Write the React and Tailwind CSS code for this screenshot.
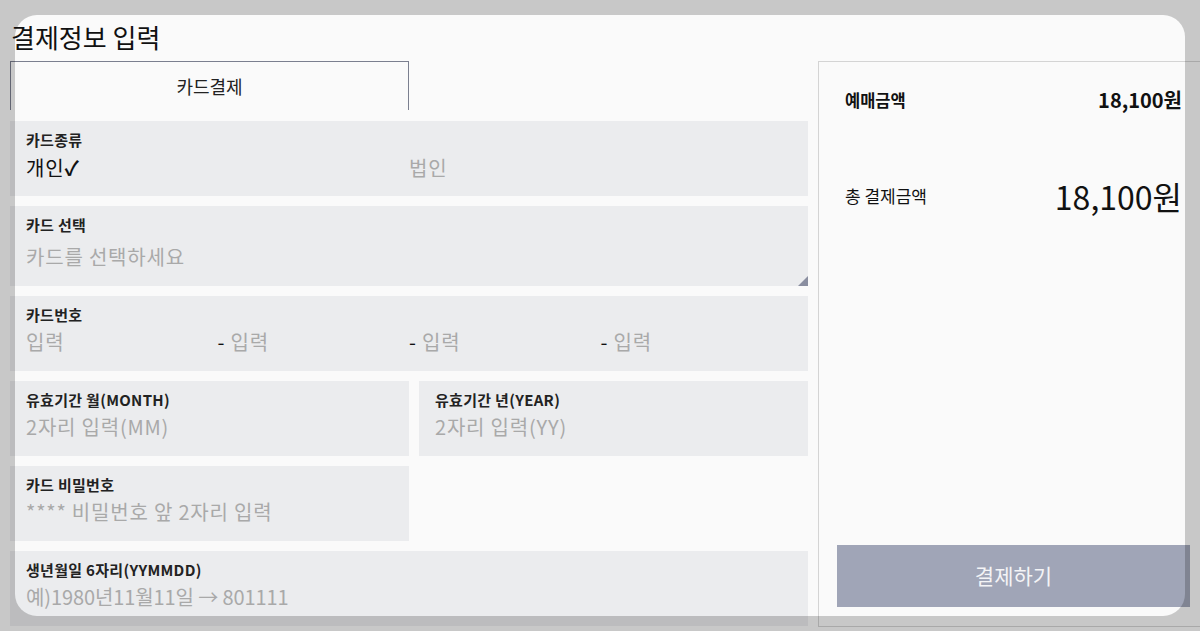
import React from "react";

function Field({ label, className = "", h = "h-[75px]", gap = "mt-[5px]", children }) {
  return (
    <div className={`relative bg-[#ebecee] px-4 pt-[10px] ${h} ${className}`}>
      <div className="text-[15px] font-bold leading-[18px] tracking-[0.3px] text-[#222]">{label}</div>
      <div className={`${gap} flex text-[20px] leading-[26px] tracking-[0.8px] text-[#a9a9a9]`}>{children}</div>
    </div>
  );
}

export default function App() {
  return (
    <div className="relative h-[631px] w-[1200px] overflow-hidden bg-[#fafafa] font-['Noto_Sans_CJK_KR',sans-serif] text-[#111]">
      <div className="pt-[21px]">
        <h1 className="ml-[11px] text-[26px] leading-[32px] font-normal text-[#111]">결제정보 입력</h1>
        <div className="mt-[8px] flex">
          {/* Left column */}
          <div className="ml-[10px] flex w-[798px] flex-col">
            <div className="flex h-[49px] w-[399px] items-center justify-center border-x border-t border-[#7b7f8f] text-[18px] leading-[22px] text-[#222]">
              카드결제
            </div>
            <div className="mt-[11px] flex flex-col gap-[10px]">
              <Field label="카드종류" gap="mt-[6px]">
                <span className="w-[384px] text-[#111]">개인<span className="font-bold">✓</span></span>
                <span className="w-[384px]">법인</span>
              </Field>
              <Field label="카드 선택" h="h-[80px]" gap="mt-[10px]">
                <span>카드를 선택하세요</span>
                <svg className="absolute right-0 bottom-0" width="10" height="10" viewBox="0 0 10 10">
                  <polygon points="10,0 10,10 0,10" fill="#8a8ea0" />
                </svg>
              </Field>
              <Field label="카드번호">
                <span className="w-[192px]">입력</span>
                <span className="w-[192px]"><span className="text-[#111]">- </span>입력</span>
                <span className="w-[192px]"><span className="text-[#111]">- </span>입력</span>
                <span className="w-[192px]"><span className="text-[#111]">- </span>입력</span>
              </Field>
              <div className="flex gap-[10px]">
                <Field label="유효기간 월(MONTH)" className="w-[399px]">
                  <span>2자리 입력(MM)</span>
                </Field>
                <Field label="유효기간 년(YEAR)" className="flex-1">
                  <span>2자리 입력(YY)</span>
                </Field>
              </div>
              <Field label="카드 비밀번호" className="w-[399px]">
                <span>**** 비밀번호 앞 2자리 입력</span>
              </Field>
              <Field label="생년월일 6자리(YYMMDD)">
                <span className="tracking-[-0.1px]">예)1980년11월11일 → 801111</span>
              </Field>
            </div>
          </div>
          {/* Right panel */}
          <div className="ml-[10px] flex h-[566px] w-[392px] shrink-0 flex-col border border-[#d4d4d4]">
            <div className="mt-[27px] flex h-[22px] items-center justify-between pl-[26px] pr-[27px]">
              <span className="text-[16.5px] font-bold text-[#111]">예매금액</span>
              <span className="text-[20px] font-bold text-[#111]">18,100원</span>
            </div>
            <div className="mt-[63px] flex h-[44px] items-center justify-between pl-[26px] pr-[27px]">
              <span className="text-[17px] text-[#111]">총 결제금액</span>
              <span className="text-[32px] leading-[44px] text-[#111]">18,100원</span>
            </div>
            <button className="mt-auto mb-[19px] ml-[18px] flex h-[62px] w-[353px] items-center justify-center bg-[#a0a5b7] text-[21px] text-[#f4f4f6]">
              결제하기
            </button>
          </div>
        </div>
      </div>
      {/* dim overlay with rounded hole */}
      <div className="pointer-events-none absolute left-[15px] top-[15px] h-[601px] w-[1170px] rounded-[22px] shadow-[0_0_0_2000px_rgba(0,0,0,0.2)]" />
    </div>
  );
}
